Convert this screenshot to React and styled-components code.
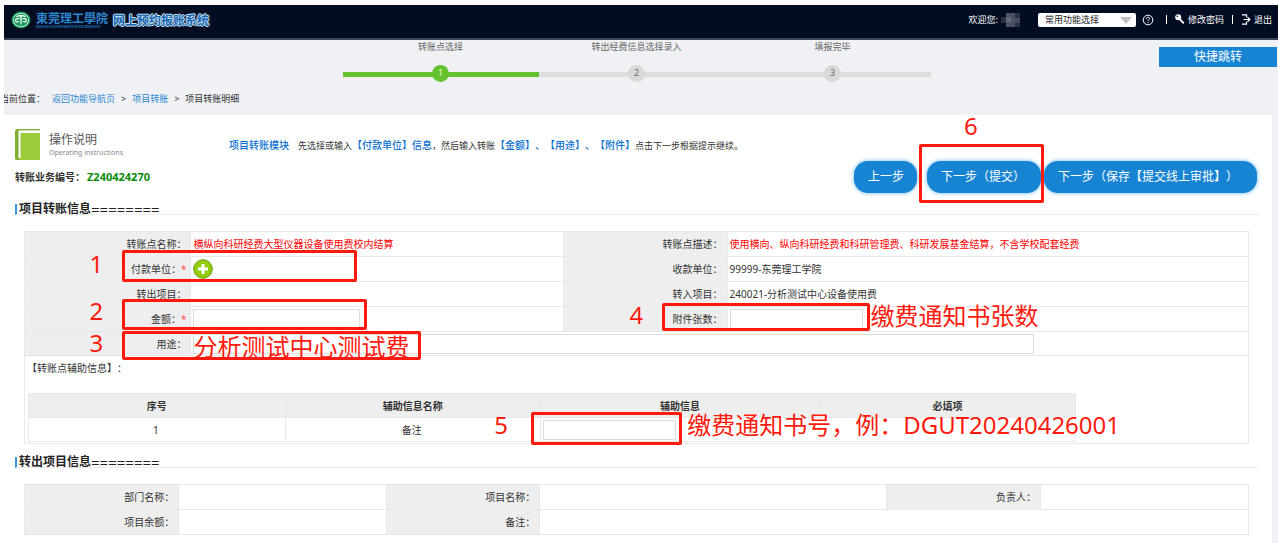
import React from "react";
import styled, { createGlobalStyle, css } from "styled-components";

const GlobalStyle = createGlobalStyle`
  *, *::before, *::after { box-sizing: border-box; }
  body {
    margin: 0;
    background: #fff;
    color: #333;
    font: 10px/12px "Noto Sans", "Noto Sans CJK SC", sans-serif;
    text-spacing-trim: space-all;
  }
  button, input, select { font: inherit; color: inherit; margin: 0; text-spacing-trim: inherit; }
  a { color: #2a86d1; text-decoration: none; }
`;

const Page = styled.div`
  padding: 5px 0 6px 4px;
  overflow: hidden;
`;
const Shell = styled.div`
  background: #f0f1f5;
`;

/* Header */
const Header = styled.header`
  display: flex;
  justify-content: space-between;
  align-items: center;
  height: 35px;
  padding: 0 6px 4px 7px;
  background: #030d22;
  border-bottom: 2px solid #3b4354;
  color: #fff;
  font-size: 9px;
`;
const Brand = styled.div`
  display: flex;
  align-items: center;
  gap: 5px;
`;
const School = styled.div`
  display: flex;
  flex-direction: column;
  margin-top: 2px;
  color: #2f86cc;
  font: bold 12px/12px "Liberation Serif", "Noto Sans CJK SC", serif;
`;
const SchoolEn = styled.span`
  font-size: 3px;
  line-height: 4px;
  white-space: nowrap;
`;
const SystemName = styled.h1`
  margin: 3px 0 0;
  font-size: 12px;
  line-height: 14px;
  font-weight: bold;
  color: #1466b0;
  text-shadow: 1px 0 #cfe4f5, -1px 0 #cfe4f5, 0 1px #cfe4f5, 0 -1px #cfe4f5;
`;
const UserBar = styled.div`
  display: flex;
  align-items: center;
  white-space: nowrap;
`;
const UserName = styled.svg`
  margin: 0 18px 0 3px;
`;
const SelectWrap = styled.div`
  position: relative;
  width: 98px;
  margin-right: 6px;
  select {
    display: block;
    appearance: none;
    width: 100%;
    height: 14px;
    padding: 0 7px;
    border: 0;
    border-radius: 2px;
    background: #fff;
    color: #222;
    line-height: 14px;
  }
  svg {
    position: absolute;
    right: 4px;
    top: 4px;
    pointer-events: none;
  }
`;
const BarLink = styled.a`
  display: flex;
  align-items: center;
  gap: 3px;
  color: #fff;
`;
const Separator = styled.span`
  width: 1px;
  height: 9px;
  margin: 0 8px 0 ${(p) => p.$before}px;
  background: #fff;
`;

/* Progress steps */
const StepArea = styled.div`
  display: grid;
  grid-template-columns: 1fr auto 1fr;
  padding: 1px 1px 0 0;
`;
const Steps = styled.ol`
  grid-column: 2;
  display: flex;
  width: 588px;
  margin: 0 8px 0 0;
  padding: 0;
  list-style: none;
  font-size: 9px;
  color: #666;
`;
const Step = styled.li`
  flex: 1;
  display: flex;
  flex-direction: column;
  align-items: center;
  gap: 12px;
`;
const StepTrack = styled.div`
  display: flex;
  justify-content: center;
  align-items: center;
  width: 100%;
  height: 17px;
  background: linear-gradient(${(p) => (p.$active ? "#64c12f, #64c12f" : "#dddddd, #dddddd")}) 0 7px / 100% 5px no-repeat;
`;
const StepDot = styled.span`
  width: 17px;
  height: 17px;
  border-radius: 50%;
  text-align: center;
  line-height: 16px;
  background: ${(p) => (p.$active ? "#64c12f" : "#d9d9d9")};
  color: ${(p) => (p.$active ? "#f4fbb8" : "#666")};
`;
const QuickJump = styled.button`
  justify-self: end;
  width: 118px;
  height: 20px;
  margin-top: 6px;
  padding: 0;
  border: 0;
  background: #1684d2;
  color: #fff;
  font-size: 12px;
  line-height: 18px;
`;
const Crumbs = styled.nav`
  display: flex;
  gap: 6px;
  padding: 11px 0 10px;
  overflow: hidden;
  font-size: 9px;
  > span:first-child { margin: 0 1px 0 -4px; }
`;

/* Content panel */
const Panel = styled.main`
  margin-right: 6px;
  padding: 14px 13px 8px 11px;
  background: #fff;
`;
const Intro = styled.div`
  display: flex;
  height: 32px;
`;
const Guide = styled.div`
  display: flex;
  gap: 9px;
  width: 214px;
`;
const GuideTitle = styled.div`
  padding-top: 4px;
  font-size: 12px;
  line-height: 14px;
  color: #555;
  small {
    display: block;
    font-size: 7px;
    line-height: 12px;
    color: #888;
    white-space: nowrap;
  }
`;
const Tip = styled.p`
  margin: 10px 0 0;
  font-size: 9px;
  white-space: nowrap;
  b { font-size: 10px; font-weight: 500; color: #0b6fd0; }
  b:first-child { margin-right: 9px; }
`;
const Actions = styled.div`
  display: flex;
  justify-content: space-between;
  align-items: center;
  padding-right: 2px;
`;
const BusinessNo = styled.div`
  display: flex;
  gap: 2px;
  font-weight: bold;
  span { color: #0a8a0a; font-size: 11px; }
`;
const Buttons = styled.div`
  display: flex;
  gap: 3px;
`;
const Anchor = styled.div`
  position: relative;
  margin-left: 7px;
`;
const PillButton = styled.button`
  height: 32px;
  padding: 0 ${(p) => p.$end}px 0 14px;
  border: 0;
  border-radius: 14px;
  background: #1684d2;
  box-shadow: 0 0 4px #5db4ee;
  color: #fff;
  font-size: 12px;
  line-height: 32px;
  white-space: nowrap;
`;

const SectionTitle = styled.h2`
  display: flex;
  align-items: center;
  height: 11px;
  margin: ${(p) => p.$top}px 0 16px;
  padding-left: 2px;
  border-left: 2px solid #3a97dc;
  border-bottom: 1px solid #ececec;
  font-size: 12px;
  line-height: 12px;
  color: #222;
  span { font-size: 15px; line-height: 10px; font-weight: 400; }
`;

/* Tables */
const Table = styled.table`
  width: 100%;
  table-layout: fixed;
  border-collapse: collapse;
  th, td {
    height: 25px;
    padding: 0 4px;
    border: 1px solid #e8e8e8;
    text-align: left;
    font-weight: normal;
    white-space: nowrap;
  }
  th {
    background: #eee;
    text-align: right;
  }
  td { position: relative; padding-left: 2px; }
`;
const ShortRow = styled.tr`
  && > * { height: 24px; }
`;
const TableBox = styled.div`
  margin: 0 10px 0 9px;
`;
const AuxTable = styled(Table)`
  width: 86%;
  margin: 19px 0 0 1px;
  && th, && td { height: 24px; text-align: center; }
  && th { font-weight: bold; }
`;
const AuxCell = styled.td`
  && { padding: 6px 2px 1px; }
`;
const RedText = styled.span`
  color: #f00;
`;
const Star = styled.span`
  color: #f55;
`;
const Field = styled.input`
  display: block;
  width: ${(p) => p.$width};
  height: 20px;
  padding: 0 4px;
  border: 1px solid #ddd;
  background: #fff;
`;
const AddButton = styled.button`
  display: block;
  width: 20px;
  height: 20px;
  padding: 0;
  border: 0;
  background: none;
  svg { display: block; }
`;

/* Red hand-made notes that lie over the form */
const place = css`
  position: absolute;
  z-index: 2;
  pointer-events: none;
  left: ${(p) => p.$x}px;
  top: ${(p) => p.$y}px;
`;
const Frame = styled.span`
  ${place}
  width: ${(p) => p.$w}px;
  height: ${(p) => p.$h}px;
  border: 3px solid #ff1a0d;
  border-radius: 2px;
`;
const Note = styled.span`
  ${place}
  color: #ff1a0d;
  font-size: 24px;
  line-height: 24px;
  white-space: nowrap;
`;

const Cols = ({ widths }) => (
  <colgroup>
    {widths.map((w, i) => (
      <col key={i} width={w} />
    ))}
  </colgroup>
);

const STEPS = ["转账点选择", "转出经费信息选择录入", "填报完毕"];

export default function App() {
  return (
    <Page>
      <GlobalStyle />
      <Shell>
        <Header>
          <Brand>
            <svg width="20" height="18" viewBox="0 0 20 18">
              <ellipse cx="10" cy="9" rx="9.5" ry="8.5" fill="#14965a" />
              <ellipse cx="10" cy="9" rx="8" ry="7" fill="#e9f7ef" />
              <ellipse cx="10" cy="9" rx="7.2" ry="6.2" fill="#14965a" />
              <path d="M5.500 5.800c2-1.600 7-1.600 9 0M8.600 8.200c-1-1.200-4-.8-4 1.200s2.600 2 3 .6M11.400 8.200c1-1.200 4-.8 4 1.200s-2.600 2-3 .6M10 5v8.500" fill="none" stroke="#fff" strokeWidth="1.200" />
            </svg>
            <School>
              東莞理工學院
              <SchoolEn>DONGGUAN UNIVERSITY OF TECHNOLOGY</SchoolEn>
            </School>
            <SystemName>网上预约报账系统</SystemName>
          </Brand>
          <UserBar>
            <span>欢迎您:</span>
            <UserName width="19" height="14" viewBox="0 0 19 14">
              <path d="M5 0h9v14H5z" fill="#4b5160" />
              <path d="M0 4h5v6H0zM14 0h5v14h-5z" fill="#2a3143" />
              <path d="M5 4h5v5H5z" fill="#646977" />
              <path d="M14 5h5v5h-5z" fill="#474d5c" />
            </UserName>
            <SelectWrap>
              <select aria-label="常用功能选择">
                <option>常用功能选择</option>
              </select>
              <svg width="12" height="7" viewBox="0 0 12 7">
                <path d="M0 0h12L6 7z" fill="#c2c2c2" />
              </svg>
            </SelectWrap>
            <BarLink href="#help" aria-label="帮助">
              <svg width="12" height="12" viewBox="0 0 12 12" fill="none" stroke="#fff">
                <circle cx="6" cy="6" r="4.8" />
                <path d="M4.4 4.9c0-2.2 3.2-2 3.2-.2C7.6 5.800 6 5.700 6 7M6 8v1" />
              </svg>
            </BarLink>
            <Separator $before={12} />
            <BarLink href="#password">
              <svg width="10" height="11" viewBox="0 0 10 11">
                <circle cx="3.200" cy="3.300" r="3" fill="#fff" />
                <circle cx="2.300" cy="2.300" r=".8" fill="#030d22" />
                <path d="M4.500 4.800l4.300 4.500M7.300 6.800l-1 1.200" stroke="#fff" strokeWidth="1.800" fill="none" />
              </svg>
              修改密码
            </BarLink>
            <Separator $before={8} />
            <BarLink href="#logout">
              <svg width="10" height="11" viewBox="0 0 10 11" fill="none" stroke="#fff" strokeWidth="1.200">
                <path d="M1 .8h4.500v2.400M1 10.200h4.500V7.800M2.500 5.500h6M6.500 3.300l2.300 2.200-2.300 2.200" />
              </svg>
              退出
            </BarLink>
          </UserBar>
        </Header>

        <StepArea>
          <Steps>
            {STEPS.map((name, i) => (
              <Step key={name}>
                {name}
                <StepTrack $active={i === 0}>
                  <StepDot $active={i === 0}>{i + 1}</StepDot>
                </StepTrack>
              </Step>
            ))}
          </Steps>
          <QuickJump type="button">快捷跳转</QuickJump>
        </StepArea>

        <Crumbs>
          <span>当前位置：</span>
          <a href="#nav">返回功能导航页</a>
          <span>&gt;</span>
          <a href="#transfer">项目转账</a>
          <span>&gt;</span>
          <span>项目转账明细</span>
        </Crumbs>

        <Panel>
          <Intro>
            <Guide>
              <svg width="25" height="31" viewBox="0 0 25 31">
                <path d="M0 2.500Q0 0 2.500 0H25v1.500H4V31H1.500Q0 31 0 29z" fill="#7fb02f" />
                <path d="M6 4h19v27H4V4z" fill="#9ccb3b" />
                <path d="M3.500 1.800H25V4H5.500v25h-2z" fill="#fff" />
              </svg>
              <GuideTitle>
                操作说明
                <small>Operating instructions</small>
              </GuideTitle>
            </Guide>
            <Tip>
              <b>项目转账模块</b>先选择或输入<b>【付款单位】信息</b>，然后输入转账
              <b>【金额】、【用途】、【附件】</b>点击下一步根据提示继续。
            </Tip>
          </Intro>
          <Actions>
            <BusinessNo>
              转账业务编号：<span>Z240424270</span>
            </BusinessNo>
            <Buttons>
              <PillButton type="button" $end={13}>上一步</PillButton>
              <Anchor>
                <PillButton type="button" $end={16}>下一步（提交）</PillButton>
                <Frame $x={-8} $y={-17} $w={125} $h={59} />
                <Note $x={37} $y={-47}>6</Note>
              </Anchor>
              <PillButton type="button" $end={19}>下一步（保存【提交线上审批】）</PillButton>
            </Buttons>
          </Actions>

          <SectionTitle $top={11}>项目转账信息<span>========</span></SectionTitle>
          <TableBox>
            <Table>
              <Cols widths={["13.6%", "30.4%", "13.4%", "42.6%"]} />
              <tbody>
                <tr>
                  <th scope="row">转账点名称：</th>
                  <td><RedText>横纵向科研经费大型仪器设备使用费校内结算</RedText></td>
                  <th scope="row">转账点描述：</th>
                  <td><RedText>使用横向、纵向科研经费和科研管理费、科研发展基金结算，不含学校配套经费</RedText></td>
                </tr>
                <tr>
                  <th scope="row">付款单位：<Star>*</Star></th>
                  <td>
                    <AddButton type="button" aria-label="添加付款单位">
                      <svg width="20" height="20" viewBox="0 0 20 20">
                        <circle cx="10" cy="10" r="9.300" fill="#93cc0c" stroke="#6d9a12" />
                        <path d="M10 5v10M5 10h10" stroke="#fff" strokeWidth="3" />
                      </svg>
                    </AddButton>
                    <Frame $x={-69} $y={-7} $w={235} $h={32} />
                    <Note $x={-102} $y={-5}>1</Note>
                  </td>
                  <th scope="row">收款单位：</th>
                  <td>99999-东莞理工学院</td>
                </tr>
                <tr>
                  <th scope="row">转出项目：</th>
                  <td />
                  <th scope="row">转入项目：</th>
                  <td>240021-分析测试中心设备使用费</td>
                </tr>
                <tr>
                  <th scope="row"><label htmlFor="amount">金额：</label><Star>*</Star></th>
                  <td>
                    <Field id="amount" $width="167px" />
                    <Frame $x={-69} $y={-8} $w={245} $h={31} />
                    <Note $x={-102} $y={-8}>2</Note>
                  </td>
                  <th scope="row"><label htmlFor="attachments">附件张数：</label></th>
                  <td>
                    <Field id="attachments" $width="133px" />
                    <Frame $x={-66} $y={-4} $w={208} $h={28} />
                    <Note $x={-98} $y={-4}>4</Note>
                    <Note $x={143} $y={-3}>缴费通知书张数</Note>
                  </td>
                </tr>
                <ShortRow>
                  <th scope="row"><label htmlFor="purpose">用途：</label></th>
                  <td colSpan={3}>
                    <Field id="purpose" $width="80%" />
                    <Frame $x={-69} $y={-1} $w={299} $h={29} />
                    <Note $x={-102} $y={-1}>3</Note>
                    <Note $x={2} $y={3}>分析测试中心测试费</Note>
                  </td>
                </ShortRow>
                <tr>
                  <AuxCell colSpan={4}>
                    【转账点辅助信息】：
                    <AuxTable>
                      <Cols widths={["24.5%", "24.4%", "26.6%", "24.5%"]} />
                      <thead>
                        <tr>
                          <th scope="col">序号</th>
                          <th scope="col">辅助信息名称</th>
                          <th scope="col">辅助信息</th>
                          <th scope="col">必填项</th>
                        </tr>
                      </thead>
                      <tbody>
                        <tr>
                          <td>1</td>
                          <td>备注</td>
                          <td>
                            <Field aria-label="辅助信息" $width="133px" />
                            <Frame $x={-10} $y={-6} $w={151} $h={33} />
                            <Note $x={-47} $y={-5}>5</Note>
                            <Note $x={146} $y={-5}>缴费通知书号，例：DGUT20240426001</Note>
                          </td>
                          <td />
                        </tr>
                      </tbody>
                    </AuxTable>
                  </AuxCell>
                </tr>
              </tbody>
            </Table>
          </TableBox>

          <SectionTitle $top={13}>转出项目信息<span>========</span></SectionTitle>
          <TableBox>
            <Table>
              <Cols widths={["12.6%", "17%", "12.5%", "28.3%", "12.6%", "17%"]} />
              <tbody>
                <tr>
                  <th scope="row">部门名称：</th>
                  <td />
                  <th scope="row">项目名称：</th>
                  <td />
                  <th scope="row">负责人：</th>
                  <td />
                </tr>
                <tr>
                  <th scope="row">项目余额：</th>
                  <td />
                  <th scope="row">备注：</th>
                  <td colSpan={3} />
                </tr>
              </tbody>
            </Table>
          </TableBox>
        </Panel>
      </Shell>
    </Page>
  );
}
